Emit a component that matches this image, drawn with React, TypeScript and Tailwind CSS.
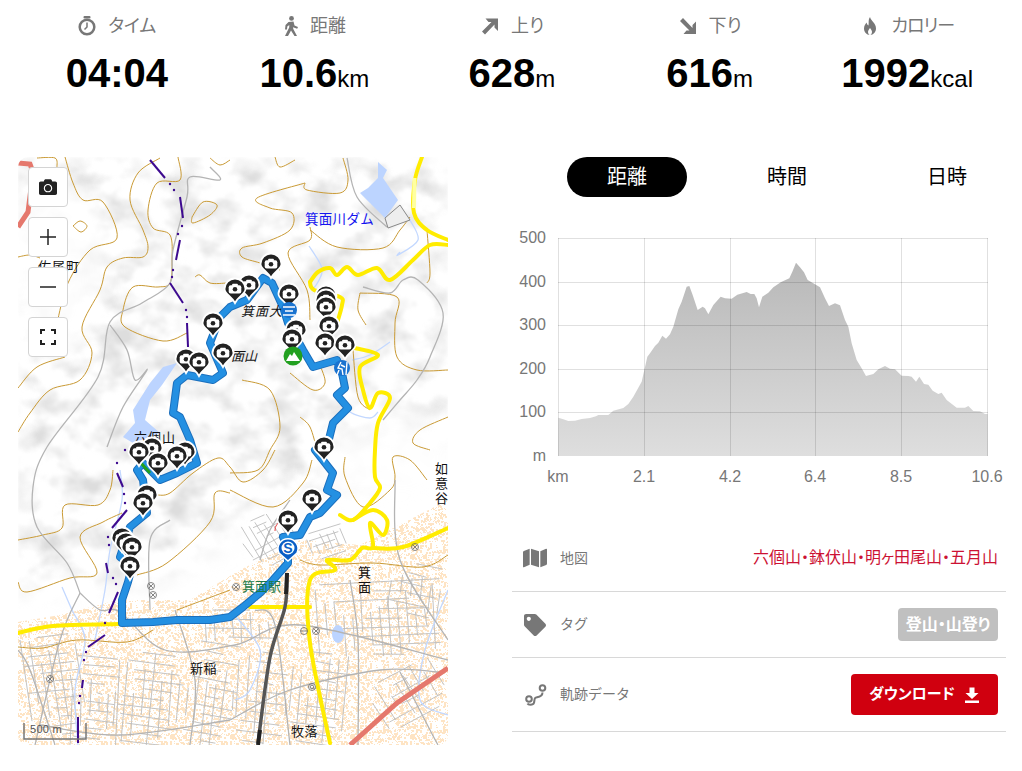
import React from 'react';
import { FaCamera, FaMap, FaTag } from 'react-icons/fa';

const FONT = "[font-family:'Liberation_Sans','Noto_Sans_CJK_JP',sans-serif]";

// small helper: "x,y x,y" polyline as an svg path
const line = (pts: number[][]) => 'M' + pts.map((p) => p.join(' ')).join('L');

// smooth path through points (catmull-rom style)
function smooth(pts: number[][]) {
  let d = `M${pts[0][0]} ${pts[0][1]}`;
  for (let i = 0; i < pts.length - 1; i++) {
    const p0 = pts[i - 1] || pts[i];
    const p1 = pts[i];
    const p2 = pts[i + 1];
    const p3 = pts[i + 2] || p2;
    d += `C${p1[0] + (p2[0] - p0[0]) / 6} ${p1[1] + (p2[1] - p0[1]) / 6} ${p2[0] - (p3[0] - p1[0]) / 6} ${p2[1] - (p3[1] - p1[1]) / 6} ${p2[0]} ${p2[1]}`;
  }
  return d;
}

function makeRandom(start: number) {
  let seed = start;
  return () => {
    seed = (seed * 16807) % 2147483647;
    return seed / 2147483647;
  };
}

const contours: number[][][] = [
  [[37, 158], [55, 158], [57, 167]],
  [[65, 157], [73, 183], [83, 200], [103, 202], [117, 238], [90, 250], [68, 283], [57, 323]],
  [[18, 257], [30, 255], [40, 258]],
  [[160, 158], [138, 173], [130, 200], [143, 230], [148, 247], [143, 257], [123, 258], [107, 267], [100, 290], [82, 327], [92, 353], [80, 380], [50, 390], [30, 413], [18, 432]],
  [[178, 157], [180, 180], [157, 183], [148, 210], [153, 228], [170, 235], [172, 260], [170, 283], [158, 287], [133, 287], [123, 310], [125, 327], [163, 341], [187, 333]],
  [[73, 226], [80, 221], [87, 226], [81, 232], [73, 226]],
  [[210, 158], [220, 165], [230, 160]],
  [[192, 217], [203, 202], [217, 205], [210, 215], [193, 223], [192, 217]],
  [[195, 277], [200, 275], [210, 283], [227, 283]],
  [[18, 388], [37, 367], [65, 357]],
  [[275, 157], [280, 167], [295, 160]],
  [[305, 183], [257, 198], [270, 208], [292, 213], [290, 230], [263, 243], [242, 248], [242, 257], [260, 263], [280, 270]],
  [[310, 227], [310, 240], [288, 253], [307, 290], [310, 320]],
  [[343, 158], [348, 180], [340, 193], [307, 190], [305, 183]],
  [[310, 230], [337, 247], [383, 248], [400, 230], [410, 217]],
  [[427, 230], [430, 273], [427, 283]],
  [[360, 293], [397, 297], [395, 323], [397, 357], [417, 370], [448, 370]],
  [[360, 293], [358, 310], [366, 325]],
  [[353, 350], [358, 397], [370, 410]],
  [[242, 380], [270, 390], [280, 427], [270, 450], [258, 470], [230, 473]],
  [[300, 417], [310, 427], [317, 450]],
  [[290, 373], [313, 390], [325, 383], [320, 365]],
  [[448, 417], [420, 430], [413, 443], [430, 450]],
  [[18, 540], [43, 535], [62, 528], [65, 505], [98, 505], [110, 490], [113, 470]],
  [[18, 582], [27, 592], [70, 578], [97, 573], [80, 537], [103, 522], [122, 513]],
  [[137, 575], [167, 563], [210, 522], [215, 493], [230, 493]],
  [[157, 495], [170, 493], [193, 473], [218, 458], [230, 467], [243, 482], [263, 470], [275, 450]],
  [[18, 647], [43, 648], [77, 640], [127, 642], [153, 630]],
  [[177, 610], [230, 590]],
  [[312, 460], [303, 483], [273, 507], [230, 490]],
  [[345, 457], [345, 477], [363, 507], [390, 490], [395, 477], [393, 457], [410, 460], [427, 480]],
  [[448, 555], [423, 567], [373, 563], [320, 565], [300, 560]],
];

const grayRoads: number[][][] = [
  [[210, 167], [220, 180], [190, 177], [187, 197], [173, 250], [170, 283], [142, 303], [110, 322], [98, 377], [47, 447], [33, 487], [37, 527], [67, 563], [80, 593]],
  [[110, 325], [127, 350], [135, 380], [147, 370], [123, 407], [107, 447]],
  [[347, 158], [357, 197], [387, 227]],
  [[363, 287], [390, 293], [403, 280], [418, 280], [443, 313], [430, 357], [417, 380], [400, 400], [383, 420]],
  [[80, 593], [60, 640], [35, 745]],
  [[80, 593], [100, 610], [120, 612], [165, 650], [235, 645], [300, 625], [448, 660]],
  [[18, 650], [30, 670], [55, 745]],
  [[230, 720], [290, 690], [380, 670], [440, 672]],
  [[400, 672], [430, 730], [438, 745]],
  [[230, 720], [120, 735], [40, 725]],
  [[175, 610], [195, 680], [190, 745]],
  [[170, 520], [150, 540], [150, 610]],
  [[255, 610], [275, 625], [290, 745]],
  [[350, 580], [358, 640], [358, 745]],
  [[395, 480], [400, 560], [448, 640]],
  [[290, 500], [270, 530], [260, 560]],
];

const yellowRoads: number[][][] = [
  [[310, 282], [318, 272], [330, 268], [337, 275], [347, 267], [358, 275], [377, 268], [390, 280], [413, 260], [430, 245], [448, 245]],
  [[422, 157], [415, 180], [414, 213], [427, 230], [448, 240]],
  [[310, 282], [314, 290], [340, 297], [342, 305], [337, 323]],
  [[355, 348], [378, 355], [360, 367], [363, 390], [370, 408], [378, 393], [390, 398], [378, 423], [375, 450], [375, 477], [380, 488], [370, 503], [353, 520], [340, 515]],
  [[353, 520], [373, 510], [387, 520], [383, 535], [370, 523], [373, 547], [362, 548], [350, 560], [327, 560], [335, 570], [310, 580], [310, 643], [330, 743]],
  [[373, 548], [403, 547], [448, 528]],
  [[250, 607], [310, 607]],
  [[18, 633], [53, 626], [120, 624]],
];

const track = [
  [288, 548], [283, 537], [300, 535], [310, 517], [320, 513], [337, 495], [327, 490], [333, 473], [315, 450], [328, 443], [333, 423], [348, 408], [337, 395], [345, 388], [342, 373], [337, 360], [313, 367], [303, 350], [288, 323], [283, 307], [272, 283], [263, 278], [247, 300], [230, 307], [220, 317], [210, 343], [223, 373], [213, 380], [187, 375], [177, 383], [173, 413], [180, 417], [190, 440], [197, 463], [177, 473], [160, 480], [143, 463], [137, 470], [143, 480], [147, 513], [130, 527], [120, 557], [132, 567], [128, 582], [122, 600], [122, 623], [153, 622], [177, 620], [210, 620], [230, 617], [243, 607], [260, 593], [273, 580], [288, 563], [288, 548],
];

const trailSegments: number[][][] = [
  [[150, 160], [165, 178]],
  [[180, 197], [183, 218]],
  [[180, 240], [176, 260]],
  [[170, 283], [183, 303]],
  [[187, 323], [188, 347]],
  [[117, 473], [123, 487]],
  [[127, 510], [112, 528]],
  [[106, 563], [108, 573]],
  [[118, 592], [109, 613]],
  [[105, 635], [88, 647]],
  [[83, 680], [82, 688]],
  [[78, 717], [78, 743]],
];
const trailDots = [[170, 184], [174, 190], [182, 226], [178, 234], [173, 270], [172, 277], [186, 310], [187, 317], [125, 450], [117, 463], [124, 494], [125, 503], [108, 537], [109, 545], [113, 578], [116, 584], [105, 623], [86, 652], [84, 660], [80, 696], [79, 703]];

const pins = [
  [271, 264], [249, 285], [235, 289], [289, 294], [213, 323], [186, 359], [199, 362], [223, 353], [296, 330], [326, 296], [326, 300], [326, 307], [329, 326], [292, 339], [325, 343], [345, 345], [324, 447], [312, 499], [288, 520], [122, 538], [126, 543], [132, 547], [130, 566], [147, 495], [143, 503], [152, 448], [139, 452], [185, 452], [177, 456], [158, 463],
];

// blocks of town streets: x, y, w, h, rotation, spacing
const blocks = [
  [20, 640, 60, 100, -8, 9],
  [75, 655, 50, 90, 4, 9],
  [120, 650, 70, 95, 6, 9],
  [195, 640, 50, 105, 8, 9],
  [240, 650, 50, 95, 5, 10],
  [295, 650, 60, 95, 6, 9],
  [315, 585, 125, 75, -3, 9],
  [365, 690, 70, 50, -30, 10],
  [235, 530, 50, 50, -30, 7],
  [305, 535, 40, 28, -20, 7],
  [395, 560, 50, 50, 10, 10],
  [205, 610, 70, 35, 0, 9],
];

function townStreets() {
  const out: string[] = [];
  const rnd = makeRandom(11);
  blocks.forEach(([x, y, w, h, r, s]) => {
    const c = Math.cos((r * Math.PI) / 180);
    const n = Math.sin((r * Math.PI) / 180);
    const pt = (a: number, b: number) => `${(x + a * c - b * n).toFixed(1)} ${(y + a * n + b * c).toFixed(1)}`;
    for (let a = 0; a <= w; a += s) {
      const from = rnd() * h * 0.5;
      const to = h - rnd() * h * 0.4;
      out.push(`M${pt(a, from)}L${pt(a + rnd() * 2, to)}`);
    }
    for (let b = 0; b <= h; b += s) {
      const from = rnd() * w * 0.5;
      const to = w - rnd() * w * 0.4;
      out.push(`M${pt(from, b)}L${pt(to, b + rnd() * 2)}`);
    }
  });
  return out.join('');
}

// one tile of scattered houses
function speckleTile() {
  const rnd = makeRandom(29);
  let d = '';
  for (let i = 0; i < 850; i++) {
    const x = Math.floor(rnd() * 60);
    const y = Math.floor(rnd() * 60);
    const w = rnd() > 0.6 ? 2 : 1;
    d += `M${x} ${y}h${w}v${w}h-${w}z`;
  }
  return d;
}

// elevation profile, taken in 3x coordinates then scaled down
const profile = [
  [145, 803], [160, 808], [175, 813], [195, 812], [215, 807], [240, 804], [258, 799], [265, 795], [295, 795], [310, 782], [340, 774], [355, 762], [370, 740], [395, 695], [403, 660], [412, 620], [420, 610], [435, 588], [445, 578], [457, 557], [468, 566], [480, 553], [490, 530], [505, 478], [515, 455], [530, 410], [538, 408], [548, 435], [563, 480], [578, 470], [585, 475], [595, 493], [610, 465], [632, 440], [645, 445], [665, 446], [682, 434], [710, 426], [722, 432], [733, 432], [740, 445], [747, 472], [757, 440], [775, 428], [790, 412], [812, 397], [838, 385], [847, 365], [858, 338], [870, 352], [882, 367], [893, 390], [915, 403], [930, 412], [945, 445], [957, 468], [975, 460], [990, 466], [1005, 510], [1015, 530], [1025, 580], [1040, 630], [1055, 655], [1068, 678], [1090, 672], [1105, 658], [1125, 648], [1140, 656], [1155, 658], [1175, 677], [1195, 678], [1205, 680], [1218, 695], [1228, 680], [1242, 702], [1255, 704], [1268, 722], [1285, 732], [1295, 728], [1310, 750], [1340, 773], [1365, 773], [1375, 768], [1390, 783], [1410, 784], [1425, 792], [1433, 792],
].map(([x, y]) => [510 + x / 3, 150 + y / 3]);

function Pin({ x, y }: { x: number; y: number }) {
  return (
    <g transform={`translate(${x} ${y})`}>
      <path d="M-10.500 0a10.500 10.500 0 1 1 21 0c0 5-7 7-10.500 14c-3.500-7-10.500-9-10.500-14z" fill="#222" stroke="#fff" strokeWidth="1.800" />
      <rect x="-6.300" y="-3.800" width="12.600" height="8.200" rx="2" fill="#fff" />
      <rect x="-2.800" y="-5.300" width="5.600" height="2.500" rx="0.800" fill="#fff" />
      <circle cx="0" cy="0.300" r="2.300" fill="#222" />
    </g>
  );
}

function TrailMap() {
  return (
    <svg viewBox="18 157 430 588" className={`block h-[588px] w-[430px] ${FONT}`}>
      <defs>
        <filter id="hills" x="0" y="0" width="100%" height="100%">
          <feTurbulence type="fractalNoise" baseFrequency="0.03 0.04" numOctaves="4" seed="7" />
          <feColorMatrix values="0 0 0 0 0.72  0 0 0 0 0.72  0 0 0 0 0.72  2.600 0 0 0 -1.100" />
          <feGaussianBlur stdDeviation="1.200" />
        </filter>
        <filter id="soft">
          <feGaussianBlur stdDeviation="12" />
        </filter>
        <mask id="upland">
          <polygon points="18,157 448,157 448,440 400,480 340,500 290,490 250,510 215,545 170,575 110,585 18,590" fill="#fff" filter="url(#soft)" />
        </mask>
        <pattern id="speckle" width="60" height="60" patternUnits="userSpaceOnUse">
          <path d={speckleTile()} fill="#fee4c4" shapeRendering="crispEdges" />
        </pattern>
      </defs>

      <rect x="18" y="157" width="430" height="588" fill="#fff" />

      {/* hill shading */}
      <g mask="url(#upland)">
        <rect x="18" y="157" width="430" height="460" filter="url(#hills)" />
      </g>
      <g filter="url(#soft)" fill="#fff" opacity="0.8">
        <ellipse cx="55" cy="270" rx="50" ry="90" />
        <ellipse cx="400" cy="460" rx="60" ry="50" />
        <ellipse cx="345" cy="470" rx="30" ry="40" />
      </g>

      {/* town */}
      <polygon points="18,622 60,615 118,600 190,600 215,585 240,570 300,540 360,545 448,500 448,745 18,745" fill="url(#speckle)" />
      <path d={townStreets()} fill="none" stroke="#bdbdbd" strokeWidth="0.9" />

      {/* water */}
      <path d="M378 162L387 170L383 178L398 200L385 218L370 203L360 193L368 188L378 178Z" fill="#bcd4ff" />
      <path d="M177 363L163 367L150 383L133 410L135 423L123 437L133 443L160 433L145 420L150 400L162 385Z" fill="#bcd4ff" />
      <ellipse cx="338" cy="634" rx="6" ry="9" fill="#bcd4ff" />
      <g fill="none" stroke="#c3d8ff" strokeWidth="1.300">
        <path d={smooth([[309, 246], [322, 268], [318, 282], [312, 290]])} />
        <path d={smooth([[410, 220], [418, 240], [398, 255], [400, 252]])} />
        <path d={smooth([[352, 360], [370, 355], [390, 342]])} />
        <path d={smooth([[345, 400], [350, 412], [370, 418], [378, 412]])} />
        <path d={smooth([[62, 587], [72, 610], [85, 640], [75, 690], [78, 745]])} />
        <path d={smooth([[120, 470], [122, 500], [110, 550], [105, 590], [95, 640]])} />
        <path d={smooth([[230, 610], [260, 650], [250, 690], [235, 700]])} />
        <path d={smooth([[448, 590], [425, 650], [420, 700], [448, 715]])} />
      </g>

      {/* contours */}
      <g fill="none" stroke="#c99a35" strokeWidth="1">
        {contours.map((c, i) => (
          <path key={i} d={smooth(c)} />
        ))}
      </g>

      {/* grey roads */}
      <g fill="none" stroke="#b4b4b4" strokeWidth="1.300">
        {grayRoads.map((c, i) => (
          <path key={i} d={smooth(c)} />
        ))}
      </g>

      {/* dam */}
      <path d="M385 218L400 205L410 220L388 228Z" fill="#eee" stroke="#888" strokeWidth="1" />

      {/* highways */}
      <path d={line([[18, 163], [30, 164], [33, 172], [28, 212], [18, 227]])} fill="none" stroke="#e5786d" strokeWidth="5" />
      <path d={line([[448, 668], [397, 703], [350, 745]])} fill="none" stroke="#e5786d" strokeWidth="5" />

      {/* yellow roads */}
      <g fill="none" stroke="#ffec00" strokeWidth="4" strokeLinejoin="round" strokeLinecap="round">
        {yellowRoads.map((c, i) => (
          <path key={i} d={smooth(c)} />
        ))}
      </g>
      <path d="M414.500 178L414 208" stroke="#ffffa0" strokeWidth="4" fill="none" />

      {/* railway */}
      <path d={smooth([[287, 573], [285, 607], [270, 657], [258, 743]])} fill="none" stroke="#555" strokeWidth="3.500" />
      <path d="M287 573L286 594M260 730L258 745" fill="none" stroke="#222" strokeWidth="4" />

      {/* long-distance trail */}
      <g fill="none" stroke="#3d0a8f" strokeWidth="2">
        {trailSegments.map((s, i) => (
          <path key={i} d={line(s)} />
        ))}
      </g>
      {trailDots.map(([x, y], i) => (
        <circle key={i} cx={x} cy={y} r="1.200" fill="#3d0a8f" />
      ))}

      {/* track */}
      <path d={line(track)} fill="none" stroke="#1b6fbd" strokeWidth="8" strokeLinejoin="round" strokeLinecap="round" />
      <path d={line(track)} fill="none" stroke="#2490e2" strokeWidth="6" strokeLinejoin="round" strokeLinecap="round" />
      <path d="M140 462L150 473" stroke="#22a020" strokeWidth="3" fill="none" />

      {/* labels */}
      <g fontSize="13" fill="#111">
        <text x="305" y="224" fill="#1414f0" fontSize="13.500" letterSpacing="0.300">箕面川ダム</text>
        <text x="241" y="316" fontStyle="italic" letterSpacing="1">箕面大</text>
        <text x="231" y="361" fontStyle="italic">面山</text>
        <text x="134" y="442" letterSpacing="1">六個山</text>
        <text x="242" y="591" fill="#1b7a4a" fontSize="13">箕面駅</text>
        <text x="358" y="577">箕</text>
        <text x="358" y="592">面</text>
        <text x="435" y="473">如</text>
        <text x="435" y="488">意</text>
        <text x="435" y="503">谷</text>
        <text x="190" y="673" letterSpacing="0.500">新稲</text>
        <text x="291" y="736" letterSpacing="0.500">牧落</text>
        <text x="38" y="271" letterSpacing="1">佐尾町</text>
      </g>
      <g fill="none" stroke="#666" strokeWidth="0.800">
        <circle cx="151" cy="586" r="3.500" />
        <path d="M149 584l4 4M153 584l-4 4" />
        <circle cx="153" cy="595" r="3.500" />
        <path d="M151 593l4 4M155 593l-4 4" />
        <circle cx="50" cy="679" r="3.500" />
        <path d="M48 677l4 4M52 677l-4 4" />
        <circle cx="316" cy="631" r="3.500" />
        <path d="M314 629l4 4M318 629l-4 4" />
        <circle cx="304" cy="631" r="3.500" />
        <path d="M301 631h6" />
        <circle cx="312" cy="687" r="3.500" />
        <circle cx="312" cy="687" r="1.800" />
        <circle cx="415" cy="547" r="3.500" />
        <path d="M413 545l4 4M417 545l-4 4" />
        <circle cx="236" cy="587" r="3.500" />
        <path d="M234 585l4 4M238 585l-4 4" />
      </g>

      {/* start, peak and facility markers */}
      <path d="M283 525a9 9 0 0 0-8 10" fill="none" stroke="#d11" strokeWidth="0.800" transform="translate(0 -4)" />
      {pins.map(([x, y], i) => (
        <Pin key={i} x={x} y={y} />
      ))}
      <circle cx="289" cy="310" r="8" fill="#1a73d0" />
      <path d="M283 307h12M285 311h8M283 315h12" stroke="#fff" strokeWidth="1.500" />
      <circle cx="293" cy="356" r="9.500" fill="#22a020" />
      <path d="M286 361l4-7 2 2 2-4 6 9z" fill="#fff" />
      <circle cx="342" cy="368" r="8" fill="#1a73d0" />
      <path d="M341 362l-3 6 4 1 1 6M341 365l4 2M339 370l-2 5M347 362l-1 13" fill="none" stroke="#fff" strokeWidth="1.400" />
      <path d="M279 553a10 10 0 1 1 18 0l-9 8z" fill="#0b5fc6" stroke="#fff" strokeWidth="1.500" />
      <circle cx="288" cy="548" r="6.500" fill="#fff" />
      <text x="288" y="553" textAnchor="middle" fontSize="14" fontWeight="700" fill="#0b5fc6">S</text>

      {/* scale */}
      <path d="M24 723V739H86V723" fill="none" stroke="#777" strokeWidth="1.500" />
      <text x="30" y="733" fontSize="11" fill="#555" letterSpacing="0.300">500 m</text>
    </svg>
  );
}

function MapButton({ children }: { children: React.ReactNode }) {
  return (
    <button className="flex h-10 w-10 items-center justify-center rounded-[4px] border border-[#d4d4d4] bg-white text-[#222]">
      {children}
    </button>
  );
}

function ElevationChart() {
  const top = 238;
  const bottom = 456;
  const ys = [
    [238, '500'],
    [282, '400'],
    [325, '300'],
    [369, '200'],
    [412, '100'],
  ] as const;
  const xs = [
    [644, '2.1'],
    [730, '4.2'],
    [815, '6.4'],
    [901, '8.5'],
    [987, '10.6'],
  ] as const;
  return (
    <svg viewBox="512 228 494 262" className={`block h-[262px] w-[494px] ${FONT}`}>
      <defs>
        <linearGradient id="elev" x1="0" y1="263" x2="0" y2="456" gradientUnits="userSpaceOnUse">
          <stop offset="0" stopColor="#b8b8b8" />
          <stop offset="1" stopColor="#dedede" />
        </linearGradient>
      </defs>
      <path d={`M558 ${bottom}L${profile.map((p) => p.join(' ')).join('L')}L988 ${bottom}Z`} fill="url(#elev)" />
      <g stroke="#000" strokeOpacity="0.12" strokeWidth="1">
        {ys.map(([y]) => (
          <path key={y} d={`M558 ${y + 0.5}H988`} />
        ))}
        <path d={`M558.500 ${top}V${bottom}`} />
        {xs.map(([x]) => (
          <path key={x} d={`M${x + 0.5} ${top}V${bottom}`} />
        ))}
      </g>
      <g fill="#777" fontSize="16">
        {ys.map(([y, t]) => (
          <text key={t} x="546" y={y + 5} textAnchor="end">{t}</text>
        ))}
        <text x="546" y="461" textAnchor="end">m</text>
        <text x="558" y="482" textAnchor="middle">km</text>
        {xs.map(([x, t]) => (
          <text key={t} x={x} y="482" textAnchor="middle">{t}</text>
        ))}
      </g>
    </svg>
  );
}

const stats = [
  { label: 'タイム', value: '04:04', unit: '', icon: 'time', labelClass: '' },
  { label: '距離', value: '10.6', unit: 'km', icon: 'walk', labelClass: '' },
  { label: '上り', value: '628', unit: 'm', icon: 'up', labelClass: '' },
  { label: '下り', value: '616', unit: 'm', icon: 'down', labelClass: '' },
  { label: 'カロリー', value: '1992', unit: 'kcal', icon: 'fire', labelClass: 'tracking-[-1px]' },
];

function StatIcon({ name }: { name: string }) {
  if (name === 'walk') {
    return (
      <svg viewBox="0 0 16 20" className="h-5 w-4" fill="currentColor">
        <circle cx="8.500" cy="2.400" r="2.400" />
        <path d="M5.500 6L10.500 5.500L11.500 9.500L15 11L14.200 12.800L10 11.200L10.300 13L14 20H11.500L8 14.500L5 20H2L6.200 11.500L6.300 9L4.300 10.500L4 13.500H2L2.500 9Z" />
      </svg>
    );
  }
  return (
    <svg viewBox="0 0 20 20" className="h-5 w-5" fill="currentColor">
      {name === 'time' && (
        <>
          <rect x="6.500" y="0" width="7" height="2.500" rx="1" />
          <circle cx="10" cy="11" r="7.300" fill="none" stroke="currentColor" strokeWidth="2.500" />
          <path d="M10 6.500V11L7.500 13.500" fill="none" stroke="currentColor" strokeWidth="1.500" />
        </>
      )}
      {name === 'up' && <path d="M5.500 2.500H18V15L14.500 11.500V8.500L5 18.500L2 15.500L11.500 6H8.500Z" />}
      {name === 'down' && <path d="M5.500 18H18V5.500L14.500 9V12L5 2L2 5L11.500 14.500H8.500Z" />}
      {name === 'fire' && <path d="M10 1c1 4 6 6 6 11.500c0 3.500-2.500 6.500-6 6.500s-6-3-6-6.500c0-3 1.500-4.500 2.500-6c.5 1.500 1 2.500 2 3c.5-3-.5-6 1.500-8.500zM10 12c-1 1.500-2 2.500-2 4s1 3 2 3s2-1.500 2-3s-1-2.500-2-4z" fillRule="evenodd" />}
    </svg>
  );
}

export default function App() {
  return (
    <div className={`h-[771px] w-[1022px] overflow-hidden bg-white pl-[18px] pr-[16px] pt-[14px] ${FONT}`}>
      {/* Stats */}
      <div className="grid grid-cols-5">
        {stats.map((s) => (
          <div key={s.label} className="flex flex-col items-center">
            <div className="flex h-6 items-center gap-[11px] text-[18px] text-[#777] [font-feature-settings:'palt']">
              <StatIcon name={s.icon} />
              <span className={s.labelClass}>{s.label}</span>
            </div>
            <div className="mt-[11px] flex items-baseline text-black">
              <span className="text-[40px] font-bold leading-[48px]">{s.value}</span>
              {s.unit && <span className="text-[24px]">{s.unit}</span>}
            </div>
          </div>
        ))}
      </div>

      <div className="mt-[60px] flex">
        {/* Map */}
        <div className="relative h-[588px] w-[430px] overflow-hidden rounded-[10px]">
          <TrailMap />
          <div className="absolute left-[10px] top-[10px] flex flex-col gap-[10px]">
            <MapButton>
              <FaCamera className="h-[18px] w-[18px]" />
            </MapButton>
            <MapButton>
              <svg viewBox="0 0 20 20" className="h-5 w-5" stroke="currentColor" strokeWidth="1.500">
                <path d="M2 10H18M10 2V18" />
              </svg>
            </MapButton>
            <MapButton>
              <svg viewBox="0 0 20 20" className="h-5 w-5" stroke="currentColor" strokeWidth="1.500">
                <path d="M2 10H18" />
              </svg>
            </MapButton>
            <MapButton>
              <svg viewBox="0 0 16 16" className="h-4 w-4" fill="none" stroke="currentColor" strokeWidth="2">
                <path d="M1 5V1H5M11 1H15V5M15 11V15H11M5 15H1V11" />
              </svg>
            </MapButton>
          </div>
        </div>

        {/* Right column */}
        <div className="ml-[64px] w-[494px]">
          <div className="ml-[35px] grid w-[480px] grid-cols-3 text-[20px]">
            <div className="flex justify-center">
              <div className="flex h-10 w-[120px] items-center justify-center rounded-full bg-black text-white">距離</div>
            </div>
            <div className="flex h-10 items-center justify-center text-black">時間</div>
            <div className="flex h-10 items-center justify-center text-black">日時</div>
          </div>

          <div className="mt-[31px]">
            <ElevationChart />
          </div>

          <div className="mt-[35px] text-[14px] text-[#777]">
            <div className="flex h-[67px] items-center justify-between border-b border-[#d8d8d8] pr-[8px]">
              <div className="flex items-center">
                <FaMap className="ml-[11px] h-[22px] w-[24px] text-[#777]" />
                <span className="ml-[13px]">地図</span>
              </div>
              <span className="text-[16px] text-[#cc1133] [font-feature-settings:'palt']">六個山・鉢伏山・明ヶ田尾山・五月山</span>
            </div>
            <div className="flex h-[66px] items-center justify-between border-b border-[#d8d8d8] pr-[8px]">
              <div className="flex items-center">
                <FaTag className="ml-[12px] h-[22px] w-[22px] text-[#777]" />
                <span className="ml-[14px]">タグ</span>
              </div>
              <span className="flex h-[33px] w-[100px] items-center justify-center rounded-[4px] bg-[#c0c0c0] text-[16px] font-bold text-white [font-feature-settings:'palt']">登山・山登り</span>
            </div>
            <div className="flex h-[74px] items-center justify-between border-b border-[#d8d8d8] pr-[8px]">
              <div className="flex items-center">
                <svg viewBox="0 0 24 24" className="ml-[12px] h-6 w-6" fill="none" stroke="#777" strokeWidth="2">
                  <circle cx="18.500" cy="5" r="2.800" />
                  <circle cx="5" cy="16" r="2.800" />
                  <path d="M18.500 9.500C18.500 14 14 14 12 14.500C9 15 12 21 8 21.500C6 21.800 4 21.500 3.500 20.500" />
                </svg>
                <span className="ml-[12px]">軌跡データ</span>
              </div>
              <button className="flex h-[41px] w-[147px] items-center justify-center gap-[9px] rounded-[4px] bg-[#d0000f] text-[15px] font-bold text-white [font-feature-settings:'palt']">
                ダウンロード
                <svg viewBox="0 0 16 16" className="h-4 w-4" fill="currentColor">
                  <path d="M5.500 0.500H10.500V6H14.500L8 12L1.500 6H5.500Z" />
                  <rect x="1" y="13.500" width="14" height="2.500" />
                </svg>
              </button>
            </div>
          </div>
        </div>
      </div>
    </div>
  );
}
